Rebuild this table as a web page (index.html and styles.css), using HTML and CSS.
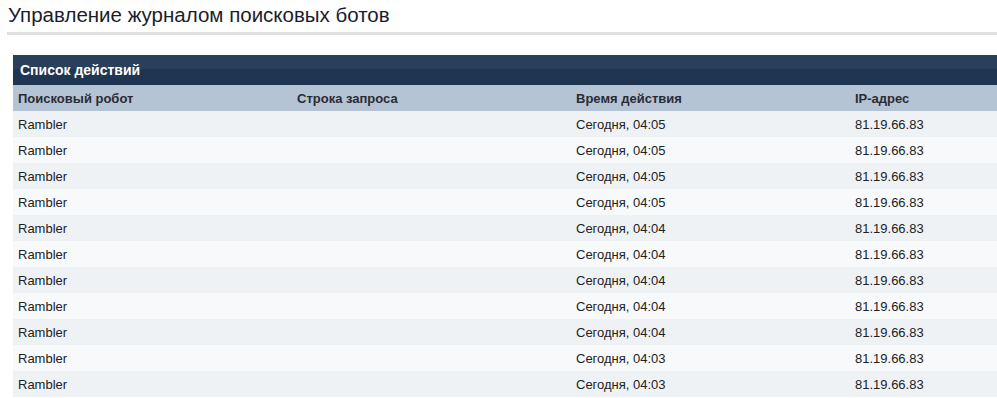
FILE: index.html
```html
<!DOCTYPE html>
<html lang="ru">
<head>
<meta charset="utf-8">
<link rel="stylesheet" href="styles.css">
</head>
<body>
<div class="page">
  <h1 class="title">Управление журналом поисковых ботов</h1>
  <div class="block">
    <div class="block-head">Список действий</div>
    <table class="log">
      <thead>
        <tr>
          <th class="c1">Поисковый робот</th>
          <th class="c2">Строка запроса</th>
          <th class="c3">Время действия</th>
          <th class="c4">IP-адрес</th>
        </tr>
      </thead>
      <tbody>
        <tr><td>Rambler</td><td></td><td>Сегодня, 04:05</td><td>81.19.66.83</td></tr>
        <tr><td>Rambler</td><td></td><td>Сегодня, 04:05</td><td>81.19.66.83</td></tr>
        <tr><td>Rambler</td><td></td><td>Сегодня, 04:05</td><td>81.19.66.83</td></tr>
        <tr><td>Rambler</td><td></td><td>Сегодня, 04:05</td><td>81.19.66.83</td></tr>
        <tr><td>Rambler</td><td></td><td>Сегодня, 04:04</td><td>81.19.66.83</td></tr>
        <tr><td>Rambler</td><td></td><td>Сегодня, 04:04</td><td>81.19.66.83</td></tr>
        <tr><td>Rambler</td><td></td><td>Сегодня, 04:04</td><td>81.19.66.83</td></tr>
        <tr><td>Rambler</td><td></td><td>Сегодня, 04:04</td><td>81.19.66.83</td></tr>
        <tr><td>Rambler</td><td></td><td>Сегодня, 04:04</td><td>81.19.66.83</td></tr>
        <tr><td>Rambler</td><td></td><td>Сегодня, 04:03</td><td>81.19.66.83</td></tr>
        <tr><td>Rambler</td><td></td><td>Сегодня, 04:03</td><td>81.19.66.83</td></tr>
      </tbody>
    </table>
  </div>
</div>
</body>
</html>
```
FILE: styles.css
```css
html, body {
  margin: 0;
  padding: 0;
  background: #ffffff;
  overflow: hidden;
}
body {
  font-family: "Liberation Sans", Arial, sans-serif;
  color: #222;
}
.page {
  padding: 0 0 0 7px;
}
.title {
  margin: 0;
  padding: 3px 0 5px 1px;
  font-size: 20.5px;
  font-weight: normal;
  line-height: 24px;
  color: #1c1c2c;
  border-bottom: 3px solid #e0e0e0;
}
.block {
  margin: 20px 0 0 6px;
}
.block-head {
  height: 30px;
  line-height: 30px;
  padding-left: 7px;
  color: #fff;
  font-weight: bold;
  font-size: 14px;
  background: linear-gradient(to bottom, #2a405a 0, #2a405a 14px, #1f3552 14px, #1f3552 100%);
}
.log {
  width: 100%;
  border-collapse: collapse;
  table-layout: fixed;
  font-size: 13px;
}
.log th, .log td {
  height: 26px;
  padding: 0 0 0 5px;
  text-align: left;
  vertical-align: middle;
}
.log th {
  background: #b4c4d5;
  color: #2b2b35;
  font-weight: bold;
}
.log td {
  color: #222;
}
.c1, .c2, .c3 { width: 274px; }
.log tbody tr:nth-child(odd) td { background: #eff2f5; }
.log tbody tr:nth-child(even) td { background: #f8f9fb; }
```
